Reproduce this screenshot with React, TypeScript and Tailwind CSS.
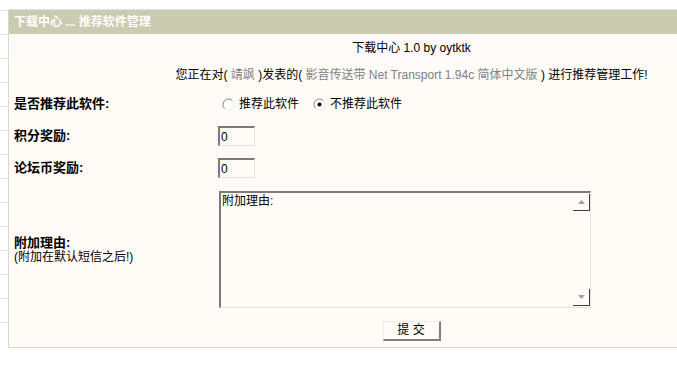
import React from "react";

const Radio = ({ checked }: { checked?: boolean }) => (
  <svg width="13" height="13" viewBox="0 0 13 13" className="shrink-0">
    <circle cx="6.5" cy="6.5" r="5.5" fill="#ffffff" />
    <path d="M2.6 10.4 A5.5 5.5 0 0 1 10.4 2.6" fill="none" stroke="#808080" strokeWidth="1" />
    <path d="M10.4 2.6 A5.5 5.5 0 0 1 2.6 10.4" fill="none" stroke="#ece8e0" strokeWidth="1" />
    {checked && <circle cx="6.5" cy="6.5" r="2" fill="#000" />}
  </svg>
);

const Field = ({ value }: { value: string }) => (
  <div className="w-[37px] h-[20px] border-t-2 border-l-2 border-t-[#7a7a7a] border-l-[#7a7a7a] border-r border-b border-r-[#e8e4dc] border-b-[#e8e4dc] bg-[#fffcf8] pl-[1px] flex items-center text-[12px] leading-none">
    {value}
  </div>
);

export default function App() {
  const lines = Array.from({ length: 14 });
  return (
    <div
      className="w-[677px] h-[367px] overflow-hidden bg-white flex text-[12px] text-black"
      style={{ fontFamily: '"Liberation Sans", "Noto Sans CJK SC", sans-serif' }}
    >
      <div className="w-[8px] shrink-0 pt-[10px] flex flex-col">
        {lines.map((_, i) => (
          <div key={i} className="h-[24px] border-t border-[#e4e4e4]" />
        ))}
      </div>
      <div className="mt-[9px] w-[806px] shrink-0 h-[339px] border-l border-t border-b border-l-[#d8d8cc] border-t-[#e2e2d6] border-b-[#d8d8cc] flex flex-col self-start">
        <div className="h-[24px] bg-[#cbcbb1] text-white font-bold px-[5px] flex items-center">
          下载中心 ... 推荐软件管理
        </div>
        <div className="h-[28px] bg-[#fffafa] flex items-center justify-center">
          下载中心 1.0 by oytktk
        </div>
        <div className="h-[26px] bg-[#fffbf7] flex items-center justify-center whitespace-pre">
          <span>您正在对( </span>
          <span className="text-[#808080]">靖飒</span>
          <span> )发表的( </span>
          <span className="text-[#808080]">影音传送带 Net Transport 1.94c 简体中文版</span>
          <span> ) 进行推荐管理工作!</span>
        </div>
        <div className="flex-1 bg-[#fffbf7] grid grid-cols-[209px_1fr] grid-rows-[32px_32px_32px_130px_1fr]">
          <div className="pl-[5px] flex items-center font-bold text-[13px]">是否推荐此软件:</div>
          <div className="flex items-center pl-[4px]">
            <label className="flex items-center gap-[4px]">
              <Radio />
              <span>推荐此软件</span>
            </label>
            <label className="flex items-center gap-[4px] ml-[14px]">
              <Radio checked />
              <span>不推荐此软件</span>
            </label>
          </div>

          <div className="pl-[5px] flex items-center font-bold text-[13px]">积分奖励:</div>
          <div className="flex items-center">
            <Field value="0" />
          </div>

          <div className="pl-[5px] flex items-center font-bold text-[13px]">论坛币奖励:</div>
          <div className="flex items-center">
            <Field value="0" />
          </div>

          <div className="pl-[5px] flex flex-col justify-center leading-[14px] pt-[2px]">
            <span className="font-bold text-[13px]">附加理由:</span>
            <span>(附加在默认短信之后!)</span>
          </div>
          <div className="flex items-center pl-[1px]">
            <div className="w-[372px] h-[117px] border-t-2 border-l-2 border-t-[#7a7a7a] border-l-[#7a7a7a] border-r border-b border-r-[#e8e4dc] border-b-[#e8e4dc] bg-[#fffcf8] flex">
              <div className="flex-1 pl-[1px] pt-[1px] leading-[14px]">附加理由:</div>
              <div className="w-[17px] flex flex-col justify-between py-[1px]">
                <div className="h-[17px] border-r border-b border-[#404040] flex items-center justify-center">
                  <svg width="7" height="4" viewBox="0 0 7 4">
                    <path d="M0 4 L3.5 0 L7 4 Z" fill="#a0a0a0" />
                  </svg>
                </div>
                <div className="h-[17px] border-r border-b border-[#404040] flex items-center justify-center">
                  <svg width="7" height="4" viewBox="0 0 7 4">
                    <path d="M0 0 L3.5 4 L7 0 Z" fill="#a0a0a0" />
                  </svg>
                </div>
              </div>
            </div>
          </div>

          <div className="col-span-2 flex items-center justify-center">
            <button className="w-[58px] h-[20px] bg-[#fffcf8] border-t border-l border-t-[#f0ece4] border-l-[#f0ece4] border-r-2 border-b-2 border-r-[#808080] border-b-[#808080] flex items-center justify-center leading-none text-[12px] whitespace-pre">
              提 交
            </button>
          </div>
        </div>
      </div>
    </div>
  );
}
